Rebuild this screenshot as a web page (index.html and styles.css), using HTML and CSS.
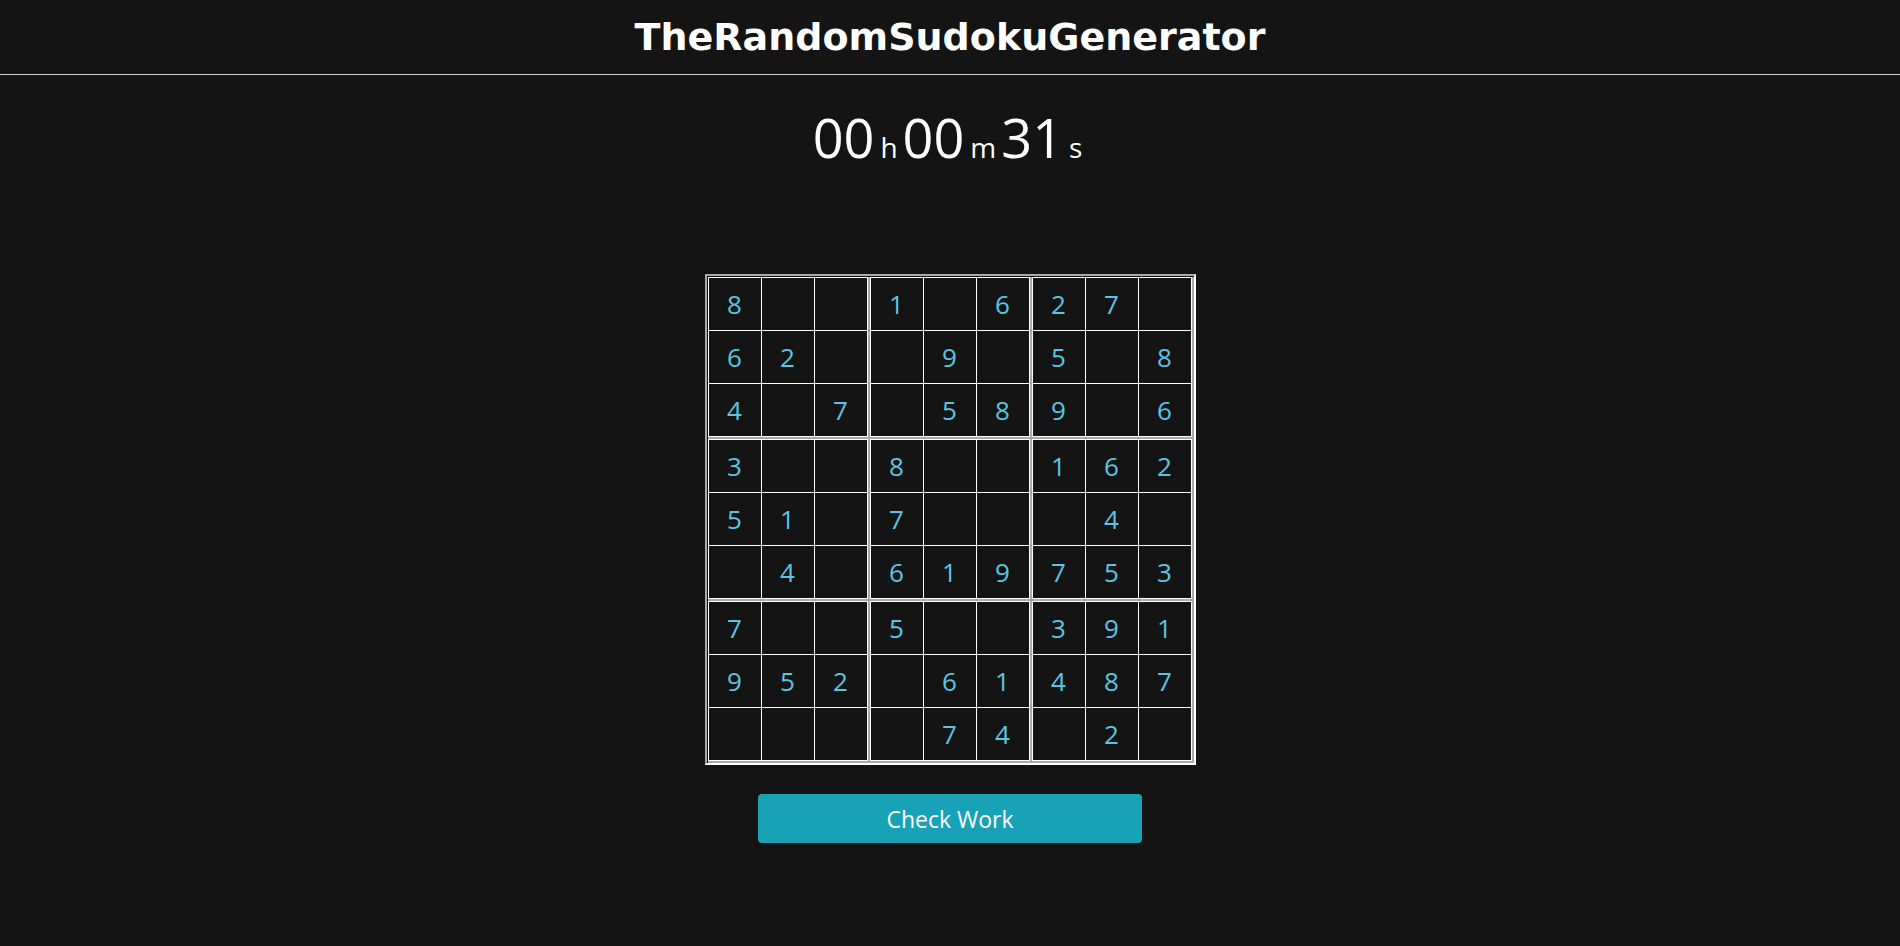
FILE: index.html
```html
<!DOCTYPE html>
<html lang="en">
<head>
<meta charset="utf-8">
<title>TheRandomSudokuGenerator</title>
<link rel="stylesheet" href="styles.css">
</head>
<body>
<header class="topbar">
  <h1 class="title">TheRandomSudokuGenerator</h1>
</header>
<main class="main">
  <div class="timer">
    <span class="num">00</span><span class="unit">h</span>
    <span class="num">00</span><span class="unit">m</span>
    <span class="num">31</span><span class="unit">s</span>
  </div>
  <div class="board">
    <div class="box">
      <div class="cell">8</div><div class="cell"></div><div class="cell"></div>
      <div class="cell">6</div><div class="cell">2</div><div class="cell"></div>
      <div class="cell">4</div><div class="cell"></div><div class="cell">7</div>
    </div>
    <div class="box">
      <div class="cell">1</div><div class="cell"></div><div class="cell">6</div>
      <div class="cell"></div><div class="cell">9</div><div class="cell"></div>
      <div class="cell"></div><div class="cell">5</div><div class="cell">8</div>
    </div>
    <div class="box">
      <div class="cell">2</div><div class="cell">7</div><div class="cell"></div>
      <div class="cell">5</div><div class="cell"></div><div class="cell">8</div>
      <div class="cell">9</div><div class="cell"></div><div class="cell">6</div>
    </div>
    <div class="box">
      <div class="cell">3</div><div class="cell"></div><div class="cell"></div>
      <div class="cell">5</div><div class="cell">1</div><div class="cell"></div>
      <div class="cell"></div><div class="cell">4</div><div class="cell"></div>
    </div>
    <div class="box">
      <div class="cell">8</div><div class="cell"></div><div class="cell"></div>
      <div class="cell">7</div><div class="cell"></div><div class="cell"></div>
      <div class="cell">6</div><div class="cell">1</div><div class="cell">9</div>
    </div>
    <div class="box">
      <div class="cell">1</div><div class="cell">6</div><div class="cell">2</div>
      <div class="cell"></div><div class="cell">4</div><div class="cell"></div>
      <div class="cell">7</div><div class="cell">5</div><div class="cell">3</div>
    </div>
    <div class="box">
      <div class="cell">7</div><div class="cell"></div><div class="cell"></div>
      <div class="cell">9</div><div class="cell">5</div><div class="cell">2</div>
      <div class="cell"></div><div class="cell"></div><div class="cell"></div>
    </div>
    <div class="box">
      <div class="cell">5</div><div class="cell"></div><div class="cell"></div>
      <div class="cell"></div><div class="cell">6</div><div class="cell">1</div>
      <div class="cell"></div><div class="cell">7</div><div class="cell">4</div>
    </div>
    <div class="box">
      <div class="cell">3</div><div class="cell">9</div><div class="cell">1</div>
      <div class="cell">4</div><div class="cell">8</div><div class="cell">7</div>
      <div class="cell"></div><div class="cell">2</div><div class="cell"></div>
    </div>
  </div>
  <button class="check-btn" type="button">Check Work</button>
</main>
</body>
</html>
```

FILE: styles.css
```css
html, body {
  margin: 0;
  padding: 0;
}

body {
  background: #141414;
  color: #ffffff;
  font-family: "Open Sans", "Noto Sans", sans-serif;
  min-height: 946px;
}

.topbar {
  height: 74px;
  border-bottom: 1px solid #cfcfcf;
  display: flex;
  justify-content: center;
  align-items: center;
}

.title {
  margin: 0;
  font-family: "DejaVu Sans", Verdana, sans-serif;
  font-weight: bold;
  font-size: 38px;
  line-height: 74px;
  color: #ffffff;
}

.main {
  display: flex;
  flex-direction: column;
  align-items: center;
}

.timer {
  margin-top: 37px;
  display: flex;
  align-items: baseline;
  line-height: 50px;
  height: 50px;
}

.num {
  font-size: 54px;
}

.unit {
  font-size: 28px;
  margin: 0 5px 0 6px;
}

.board {
  margin-top: 112px;
  display: grid;
  grid-template-columns: repeat(3, 162px);
  border: 2px solid;
  border-color: #a9a9a9 #ffffff #ffffff #a9a9a9;
  padding: 1px 0 0 1px;
}

.box {
  display: grid;
  grid-template-columns: repeat(3, 52px);
  grid-auto-rows: 52px;
  gap: 1px;
  padding: 1px;
  background: #ffffff;
  border-right: 2px solid #a9a9a9;
  border-bottom: 2px solid #a9a9a9;
}

.cell {
  background: #141414;
  color: #5bc5e2;
  font-size: 26px;
  display: flex;
  align-items: center;
  justify-content: center;
}

.check-btn {
  margin-top: 29px;
  width: 384px;
  height: 49px;
  background: #17a2b8;
  color: #ffffff;
  border: none;
  border-radius: 4px;
  font-family: "Open Sans", "Noto Sans", sans-serif;
  font-size: 23px;
  cursor: pointer;
}
```
